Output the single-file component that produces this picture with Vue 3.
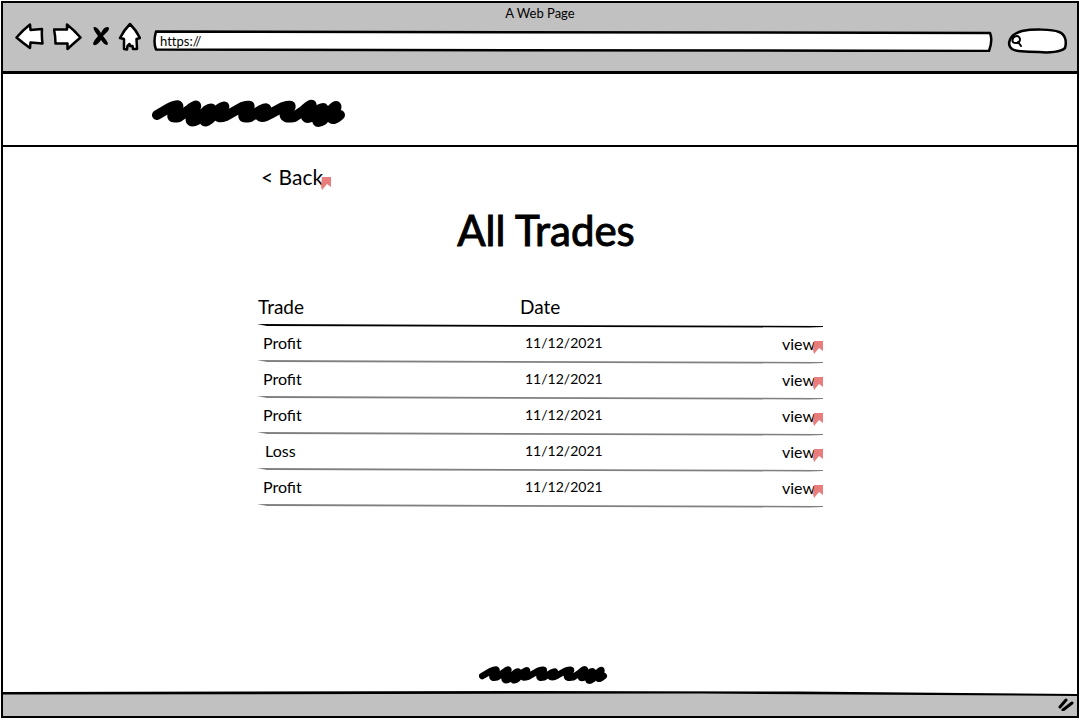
<script setup>
import { ref } from 'vue'

const address = ref('https://')
const query = ref('')
const trades = [
  { id: 1, result: 'Profit', date: '11/12/2021' },
  { id: 2, result: 'Profit', date: '11/12/2021' },
  { id: 3, result: 'Profit', date: '11/12/2021' },
  { id: 4, result: 'Loss', date: '11/12/2021' },
  { id: 5, result: 'Profit', date: '11/12/2021' },
]
const scribble = 'M5 21L17 14Q30 8 25 15L21 20Q18 25 27 23L38 15Q47 8 43 15L39 23Q37 30 45 26L55 16Q62 12 58 18L52 25Q52 30 58 25L67 15Q75 10 71 15L66 21Q65 25 74 22L90 13Q100 10 97 14L92 20Q89 25 98 23L109 16Q117 12 113 17L107 21Q110 25 118 20L131 13Q141 10 138 14L133 20Q131 25 142 23L151 17Q162 7 159 13L154 22Q154 26 161 22L168 15Q174 12 170 18L165 26Q165 30 171 26L180 15Q186 9 184 15L179 23Q180 28 188 21'
</script>

<template>
  <div class="window">
    <header class="chrome">
      <p class="caption">A Web Page</p>
      <div class="toolbar">
        <nav class="controls" aria-label="Browser">
          <button type="button" aria-label="Go back">
            <svg class="glyph" width="30" height="30" viewBox="0 0 30 30"><path d="M1.500 15.500Q8 8 15 2.500L15.500 8L27 7Q26.500 14 27.500 21.500L15.500 20.500L15 26Q8 21 1.500 15.500Z" /></svg>
          </button>
          <button type="button" aria-label="Go forward">
            <svg class="glyph" width="30" height="30" viewBox="0 0 30 30"><path d="M1 7.500L14 7.500L14 2.500Q21 8 27.500 15.500Q21 21 14.500 27L14.500 21.500L2.500 21.500Q2.500 14 1 7.500Z" /></svg>
          </button>
          <button type="button" aria-label="Stop">
            <svg width="18" height="30" viewBox="0 0 18 30"><path d="M3 5Q6 4 10 11Q13 4 17 5Q19 6 17 9L12 14Q17 20 17 22Q15 25 10 18Q6 24 3 23Q0 22 7 14Q1 6 3 5Z" /></svg>
          </button>
          <button type="button" aria-label="Home">
            <svg class="glyph" width="24" height="30" viewBox="0 0 24 30"><path d="M13 2Q19 8 23 16L19.500 17L20 27L16 27L15.500 24L13 24L12.500 22L10.500 24L10 27.500L7 27L7 17L3 16Q7 8 13 2Z" /></svg>
          </button>
        </nav>
        <div class="address">
          <svg class="outline" viewBox="0 0 840 22" preserveAspectRatio="none" aria-hidden="true"><path d="M3 1.500L837 3Q840 10 836 21L3 19.500Q0 12 3 1.500Z" /></svg>
          <input v-model="address" type="text" aria-label="Address" />
        </div>
        <div class="search">
          <svg class="outline" viewBox="0 0 60 26" preserveAspectRatio="none" aria-hidden="true"><path d="M15 3C25 1 45 1 52 4C58 6 60 13 58 20C54 24 42 25 32 24C22 23 11 25 5 21C0 17 1 7 15 3Z" /></svg>
          <svg class="lens" width="12" height="12" viewBox="0 0 12 12" aria-hidden="true"><path d="M4 1.500Q8 0 9 4Q9 8 5 8Q1 8 1.500 5Q2 2 4 1.500M7 7L10 11" /></svg>
          <input v-model="query" type="text" aria-label="Search" />
        </div>
      </div>
    </header>
    <div class="brand">
      <svg width="196" height="36" viewBox="0 0 196 36" role="img" aria-label="Logo"><path class="scribble" :d="scribble" /></svg>
    </div>
    <main class="page">
      <div class="content">
        <a class="link back" href="#">&lt; Back<svg class="flag" width="10" height="13" viewBox="0 0 10 13" aria-hidden="true"><path d="M1 0H10V10L6 7L1 13L0 9Z" /></svg></a>
        <h1>All Trades</h1>
        <table>
          <thead>
            <tr>
              <th scope="col">Trade</th>
              <th scope="col">Date</th>
              <td>
                <svg class="rule" viewBox="0 0 566 4" preserveAspectRatio="none" aria-hidden="true"><path d="M0 0L566 2L566 3L552 3.500L10 2Z" /></svg>
              </td>
            </tr>
          </thead>
          <tbody>
            <tr v-for="trade in trades" :key="trade.id">
              <td :class="{ loss: trade.result === 'Loss' }">{{ trade.result }}</td>
              <td class="date">{{ trade.date }}</td>
              <td class="action">
                <a class="link" href="#">view<svg class="flag" width="10" height="13" viewBox="0 0 10 13" aria-hidden="true"><path d="M1 0H10V10L6 7L1 13L0 9Z" /></svg></a>
                <svg class="rule" viewBox="0 0 566 4" preserveAspectRatio="none" aria-hidden="true"><path d="M0 0L566 2L566 3L552 3.500L10 2Z" /></svg>
              </td>
            </tr>
          </tbody>
        </table>
      </div>
      <svg class="mark" width="130" height="24" viewBox="0 0 196 36" role="img" aria-label="Footer logo"><path class="scribble" :d="scribble" /></svg>
    </main>
    <footer class="status">
      <svg class="edge" viewBox="0 0 1080 5" preserveAspectRatio="none" aria-hidden="true"><path class="sky" d="M0 0H1080V3L540 1L0 2Z" /><path d="M0 1L540 0L800 0.500L1080 3V5L700 2.500L0 3.500Z" /></svg>
      <svg class="grip" width="18" height="14" viewBox="0 0 18 14" aria-hidden="true"><path d="M3 10L9 3M6 13L15 6" /></svg>
    </footer>
  </div>
</template>

<style>
body {
  margin: 0;
  background: #fff;
}
</style>

<style scoped>
.window {
  box-sizing: border-box;
  min-height: 100vh;
  display: flex;
  flex-direction: column;
  padding: 1px 1px 2px;
  background: #fff;
  color: #000;
  font-family: Lato, "Open Sans", sans-serif;
  font-size: 16px;
}
.chrome {
  box-sizing: border-box;
  height: 73px;
  border: 2px solid #000;
  border-bottom-width: 3px;
  background: #c1c1c1;
}
.caption {
  margin: 0;
  padding-top: 2px;
  text-align: center;
  font-size: 13px;
  line-height: 17px;
}
.toolbar {
  display: flex;
  align-items: center;
  padding: 0 10px 0 12px;
}
.controls {
  display: flex;
  gap: 8px;
  margin-top: -2px;
  margin-right: 12px;
}
button {
  display: block;
  padding: 0;
  border: 0;
  background: none;
}
svg {
  display: block;
}
.glyph,
.outline {
  fill: #fff;
  stroke: #000;
  stroke-width: 2.5px;
  stroke-linejoin: round;
}
.outline {
  position: absolute;
  inset: 0;
  width: 100%;
  height: 100%;
}
.address,
.search {
  position: relative;
  display: flex;
  align-items: center;
  margin-top: 6px;
}
.address {
  flex: 1;
  height: 22px;
  margin-right: 14px;
}
.search {
  width: 60px;
  height: 26px;
}
input {
  position: relative;
  box-sizing: border-box;
  width: 100%;
  min-width: 0;
  padding: 0 7px;
  border: 0;
  outline: 0;
  background: none;
  color: #000;
  font: inherit;
  font-size: 13px;
  font-variant-ligatures: none;
  line-height: 16px;
}
.lens {
  position: relative;
  flex: none;
  margin-left: 4px;
  fill: none;
  stroke: #000;
  stroke-width: 2px;
  stroke-linecap: round;
}
.brand {
  box-sizing: border-box;
  height: 73px;
  padding: 20px 0 0 149px;
  border: solid #000;
  border-width: 0 2px 2px;
}
.scribble {
  fill: none;
  stroke: #000;
  stroke-width: 10px;
  stroke-linecap: round;
  stroke-linejoin: round;
}
.page {
  flex: 1;
  display: flex;
  flex-direction: column;
  align-items: center;
  border: solid #000;
  border-width: 0 2px;
}
.content {
  width: 566px;
  max-width: 100%;
  padding-top: 17px;
}
.link {
  display: inline-flex;
  color: inherit;
  text-decoration: none;
}
.back {
  padding-left: 4px;
  font-size: 21px;
  line-height: 26px;
}
.flag {
  align-self: flex-end;
  margin-left: -2px;
  fill: #e77d7d;
}
h1 {
  margin: 15px 0 35px;
  padding-left: 12px;
  text-align: center;
  font-size: 42px;
  font-weight: 400;
  line-height: 50px;
  -webkit-text-stroke: 1px #000;
}
table {
  width: 100%;
  border-collapse: collapse;
  table-layout: fixed;
}
tr {
  position: relative;
  height: 36px;
}
th,
td {
  padding: 0 0 2px 6px;
  text-align: left;
  line-height: 20px;
}
th {
  padding-left: 1px;
  font-size: 19px;
  font-weight: 400;
}
th:first-child {
  width: 261px;
}
.loss {
  padding-left: 8px;
}
.date {
  font-size: 14px;
}
.action {
  text-align: right;
}
.action .link {
  vertical-align: middle;
}
.rule {
  position: absolute;
  left: 0;
  bottom: -2px;
  width: 100%;
  height: 4px;
  fill: #808080;
}
thead .rule {
  fill: #000;
}
.mark {
  margin: auto 0 5px 8px;
}
.status {
  position: relative;
  box-sizing: border-box;
  display: flex;
  justify-content: flex-end;
  align-items: center;
  height: 27px;
  padding-right: 2px;
  border: solid #000;
  border-width: 0 2px 2px;
  background: #c1c1c1;
}
.edge {
  position: absolute;
  top: 0;
  left: 0;
  width: 100%;
  height: 5px;
}
.sky {
  fill: #fff;
}
.grip {
  fill: none;
  stroke: #000;
  stroke-width: 3px;
  stroke-linecap: round;
}
</style>
